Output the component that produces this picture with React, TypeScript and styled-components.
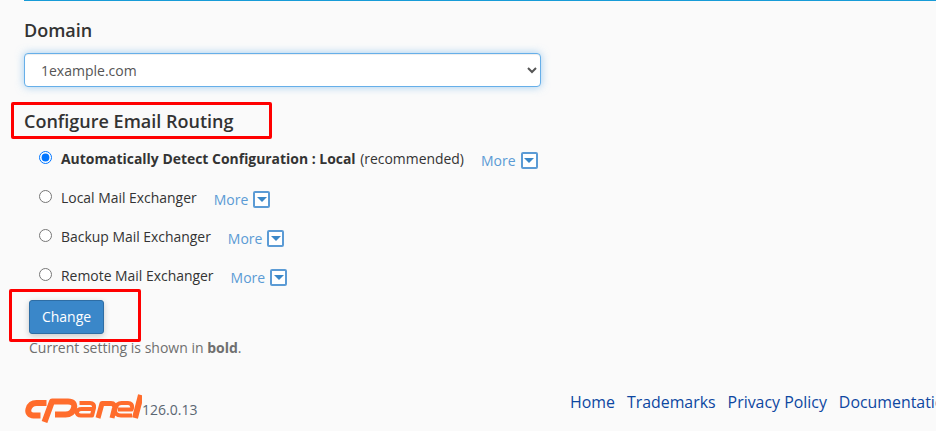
import React from "react";
import styled, { createGlobalStyle } from "styled-components";

const Global = createGlobalStyle`
  html, body { margin: 0; padding: 0; background: #fafafa; overflow: hidden; }
  body { font-family: "Open Sans", "Liberation Sans", sans-serif; color: #333; }
`;

const Page = styled.div`
  position: relative;
  width: 936px;
  height: 431px;
  overflow: hidden;
  box-sizing: border-box;
  padding: 0 0 0 24px;
`;
const TopRule = styled.div`
  height: 1px;
  background: #179bd7;
  margin-bottom: 17px;
`;
const SectionTitle = styled.h2`
  margin: 0;
  font-size: 18px;
  line-height: 24px;
  font-weight: 600;
  color: #333;
`;
const DomainSelect = styled.select`
  display: block;
  width: 517px;
  height: 34px;
  margin: 11px 0 22px;
  padding: 0 12px;
  box-sizing: border-box;
  background: #fff;
  border: 1px solid #66afe9;
  border-radius: 4px;
  box-shadow: inset 0 1px 1px rgba(0,0,0,.075), 0 0 8px rgba(102,175,233,.6);
  font: 14px "Open Sans", sans-serif;
  color: #555;
  outline: none;
`;
const Options = styled.div`
  display: flex;
  flex-direction: column;
  gap: 19px;
  padding: 16px 0 0 15px;
`;
const OptionRow = styled.div`
  display: flex;
  align-items: flex-start;
  height: 20px;
`;
const Radio = styled.input`
  width: 13px;
  height: 13px;
  margin: 2px 9px 0 0;
  accent-color: #0075ff;
`;
const OptionLabel = styled.label`
  font-size: 13.93px;
  line-height: 20px;
  color: #333;
  white-space: pre;
  b { margin-right: 1px; }
`;
const MoreLink = styled.a`
  display: flex;
  align-items: center;
  margin: 2px 0 0 17px;
  color: #5b9bd5;
  font-size: 14px;
  line-height: 20px;
  gap: 5px;
`;
const Caret = styled.span`
  display: inline-flex;
  align-items: center;
  justify-content: center;
  box-sizing: border-box;
  width: 17px;
  height: 17px;
  margin-top: -2px;
  border: 2px solid #5b9bd5;
  border-radius: 2px;
  background: #fff;
  &::after {
    content: "";
    border-left: 5px solid transparent;
    border-right: 5px solid transparent;
    border-top: 5px solid #3a87c8;
  }
`;
const ChangeButton = styled.button`
  display: block;
  width: 75px;
  height: 34px;
  margin: 14px 0 0 5px;
  padding: 0 0 2px;
  background: #3a87c9;
  border: 1px solid #2e6da4;
  border-radius: 3px;
  box-shadow: 0 2px 6px rgba(0,0,0,.2);
  color: #fff;
  font: 14px "Open Sans", sans-serif;
`;
const HelpText = styled.p`
  margin: 4px 0 0 5px;
  font-size: 14px;
  line-height: 20px;
  color: #6f6f6f;
  b { font-weight: 700; }
`;
const Footer = styled.footer`
  display: flex;
  align-items: flex-start;
  margin-top: 33px;
`;
const Brand = styled.div`
  display: flex;
  flex: none;
  align-items: flex-start;
  width: 546px;
  padding-top: 2px;
`;
const Version = styled.span`
  margin: 7px 0 0 0;
  font-size: 14px;
  line-height: 20px;
  color: #5a6672;
`;
const FooterNav = styled.nav`
  display: flex;
  flex: none;
  gap: 12px;
  white-space: nowrap;
`;
const FooterLink = styled.a`
  font-size: 15.9px;
  line-height: 22px;
  color: #0d47a1;
`;
const Annotation = styled.div<{ $x: number; $y: number; $w: number; $h: number }>`
  position: absolute;
  left: ${p => p.$x}px;
  top: ${p => p.$y}px;
  width: ${p => p.$w}px;
  height: ${p => p.$h}px;
  box-sizing: border-box;
  border: 3px solid #f00;
  border-radius: 2px;
`;

const Logo = () => (
  <svg width="118" height="30" viewBox="0 0 118 30" aria-label="cPanel" style={{ flex: "none" }}>
    <g fill="none" stroke="#ff6c2c" strokeLinejoin="round">
      <path strokeWidth="6" d="M22.500 10H12.500C8 10 5.500 12.500 4.500 16c-1 3.500 1 6.500 5 6.500H16.500" />
      <path strokeWidth="6" d="M20.500 29 28 8.500H44c5 0 7 2.500 6 6.500-1 4-4 6.500-8.500 6.500H31" />
      <path strokeWidth="4.200" d="M55.500 10H66c3 0 4.500 2 4 4.500L68 22.500H57c-3 0-4.500-1.500-4-3.500.5-2 2-3 4.500-3H69.500" />
      <path strokeWidth="5" d="M74 25 78 10.500H87c3 0 4 2 3.500 4.500L88 25" />
      <path strokeWidth="4.200" d="M108 22.500H97c-4 0-6.500-2-5.800-5.500l.5-2c.7-3 2.800-5 5.800-5H104c3 0 4.500 2 4 4.500l-.5 2H94" />
      <path strokeWidth="6" d="M117 2 111 25" />
    </g>
  </svg>
);

const rows = [
  { id: "auto", checked: true, label: <><b>Automatically Detect Configuration : Local</b> (recommended)</> },
  { id: "local", checked: false, label: "Local Mail Exchanger" },
  { id: "backup", checked: false, label: "Backup Mail Exchanger" },
  { id: "remote", checked: false, label: "Remote Mail Exchanger" },
];

export default function App() {
  return (
    <Page>
      <Global />
      <TopRule />
      <SectionTitle>Domain</SectionTitle>
      <DomainSelect defaultValue="1example.com">
        <option>1example.com</option>
      </DomainSelect>
      <SectionTitle>Configure Email Routing</SectionTitle>
      <Options>
        {rows.map(r => (
          <OptionRow key={r.id}>
            <Radio type="radio" name="routing" id={r.id} defaultChecked={r.checked} />
            <OptionLabel htmlFor={r.id}>{r.label}</OptionLabel>
            <MoreLink>More <Caret /></MoreLink>
          </OptionRow>
        ))}
      </Options>
      <ChangeButton>Change</ChangeButton>
      <HelpText>Current setting is shown in <b>bold</b>.</HelpText>
      <Footer>
        <Brand>
          <Logo />
          <Version>126.0.13</Version>
        </Brand>
        <FooterNav>
          <FooterLink>Home</FooterLink>
          <FooterLink>Trademarks</FooterLink>
          <FooterLink>Privacy Policy</FooterLink>
          <FooterLink>Documentation</FooterLink>
        </FooterNav>
      </Footer>
      <Annotation $x={11} $y={102} $w={261} $h={37} />
      <Annotation $x={9} $y={289} $w={132} $h={53} />
    </Page>
  );
}
